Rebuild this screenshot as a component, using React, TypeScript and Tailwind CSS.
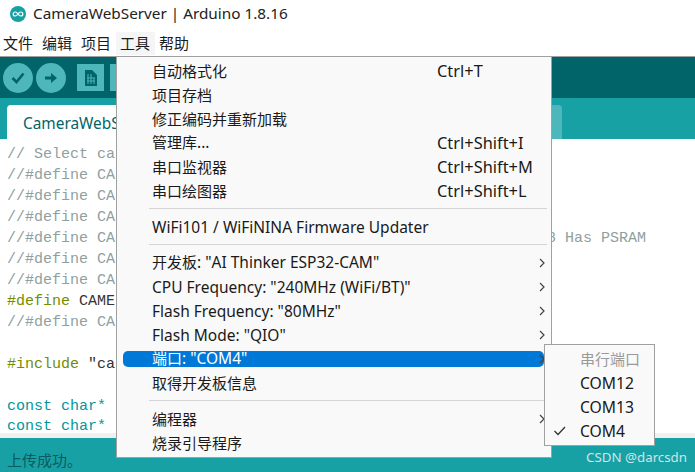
const comment = 'text-[#8f9fa0]';

const code = [
  '// Select ca',
  '//#define CA',
  '//#define CA',
  '//#define CA',
  '//#define CA',
  '//#define CA',
  '//#define CA',
];

function Chevron() {
  return (
    <svg width="8" height="10" viewBox="0 0 8 10" className="absolute right-[5px] top-[7px]">
      <path d="M2 1l4 4-4 4" fill="none" stroke="#444" strokeWidth="1.2" />
    </svg>
  );
}

function Item({ label, latin, keys, sub, active }: { label?: string; latin?: string; keys?: string; sub?: boolean; active?: boolean }) {
  return (
    <div className={`relative flex h-6 items-center justify-between pl-[35px] pr-[26px] ${active ? 'text-white' : ''}`}>
      {active && <div className="absolute left-[6px] right-[7px] top-[4px] h-4 rounded-[5px] bg-[#0078d7]" />}
      <span className={`relative ${label ? '' : 'pt-[2px]'}`}>
        {label}
        {latin && <span className="text-[15.5px]">{latin}</span>}
      </span>
      {keys && <span className="w-[88px] whitespace-nowrap text-[16.4px]">{keys}</span>}
      {sub && <Chevron />}
    </div>
  );
}

function Sep() {
  return <div className="mb-[6px] ml-[32px] mr-[4px] mt-[5px] h-px bg-[#d5d5d5]" />;
}

export default function App() {
  return (
    <div className="relative flex h-[472px] w-[695px] flex-col overflow-hidden bg-white font-[family-name:'Noto_Sans','Noto_Sans_CJK_SC',sans-serif] text-[15px] text-[#1a1a1a]">
      {/* barra de titulo */}
      <div className="flex h-[27px] shrink-0 items-center pl-[10px]">
        <svg width="16" height="16" viewBox="0 0 16 16">
          <circle cx="8" cy="8" r="8" fill="#17a1a5" />
          <path d="M8 8C7 6.600 6.200 6 5.200 6a2 2 0 0 0 0 4c1 0 1.800-.6 2.800-2s1.800-2 2.800-2a2 2 0 0 1 0 4c-1 0-1.800-.6-2.800-2z" fill="none" stroke="#fff" strokeWidth="1.200" />
        </svg>
        <span className="ml-[7px] text-[15.300px] text-[#222]">CameraWebServer | Arduino 1.8.16</span>
      </div>

      {/* menu */}
      <div className="flex h-[30px] shrink-0 items-end border-b border-[#a0a0a0] pb-px pl-[3px]">
        <span className="flex h-[23px] w-[39px] items-center">文件</span>
        <span className="flex h-[23px] w-[39px] items-center">编辑</span>
        <span className="flex h-[23px] w-[35px] items-center">项目</span>
        <span className="flex h-[23px] w-[39px] items-center bg-[#f5f5f5] pl-[4px]">工具</span>
        <span className="ml-[4px] flex h-[23px] items-center">帮助</span>
      </div>

      {/* toolbar */}
      <div className="flex h-[41px] shrink-0 items-center gap-[3px] bg-[#006468] pl-[3px]">
        <div className="flex h-[30px] w-[30px] items-center justify-center rounded-full bg-[#4db7bb]">
          <svg width="16" height="14" viewBox="0 0 16 14">
            <path d="M2.500 7l4 4 7-8.500" fill="none" stroke="#006468" strokeWidth="2.600" />
          </svg>
        </div>
        <div className="flex h-[30px] w-[30px] items-center justify-center rounded-full bg-[#4db7bb]">
          <svg width="16" height="14" viewBox="0 0 16 14">
            <path d="M2 5.500h6V2l6 5-6 5V8.500H2z" fill="#006468" />
          </svg>
        </div>
        <div className="ml-[8px] flex h-[27px] w-[27px] items-center justify-center bg-[#4db7bb]">
          <svg width="14" height="18" viewBox="0 0 14 18">
            <path d="M1 1h7l5 5v11H1z" fill="#006468" />
            <path d="M4 5v10M7 5v10M10 9v6M3 9h8M3 12h8" stroke="#4db7bb" strokeWidth="1" />
          </svg>
        </div>
        <div className="ml-[3px] h-[27px] w-[27px] bg-[#4db7bb]" />
      </div>

      {/* pestañas */}
      <div className="flex h-[41px] shrink-0 items-end gap-[2px] bg-[#17a1a5] pl-[7px]">
        <div className="flex h-[34px] w-[180px] items-center overflow-hidden rounded-t-[4px] bg-white pl-[16px] pt-[3px] text-[15.400px] text-[#006468]">
          CameraWebS
        </div>
        <div className="h-[34px] w-[373px] rounded-t-[4px] bg-[#4db7bb]" />
      </div>

      {/* editor */}
      <div className="relative min-h-0 flex-1 whitespace-pre pl-[7px] pt-[5px] font-[family-name:'Liberation_Mono',monospace] text-[15px] leading-[21px]">
        {code.map((l, i) => (
          <div key={i} className={`h-[21px] ${comment}`}>{l}</div>
        ))}
        <div className="h-[21px]"><span className="text-[#728e00]">#define</span> <span className="text-[#333]">CAME</span></div>
        <div className={`h-[21px] ${comment}`}>//#define CA</div>
        <div className="h-[21px]" />
        <div className="h-[21px]"><span className="text-[#728e00]">#include</span> <span className="text-[#333]">"ca</span></div>
        <div className="h-[21px]" />
        <div className="h-[21px] text-[#00979c]">const char*</div>
        <div className="h-[16px] pt-[4px] leading-[12px] text-[#00979c]">const char*</div>
        {/* lo que asoma a la derecha del menu */}
        <div className={`absolute left-[547px] top-[89px] ${comment}`}>8 Has PSRAM</div>
      </div>

      {/* estado */}
      <div className="h-[5px] shrink-0 bg-[#f0f0f0]" />
      <div className="flex h-[34px] shrink-0 items-center justify-between bg-[#17a1a5] pl-[7px] pr-[8px]">
        <span className="pt-[10px] text-[15px] text-[#0b5a5e]">上传成功。</span>
        <span className="pt-[6px] text-[13.300px] text-[#cfe5e5]">CSDN @darcsdn</span>
      </div>

      {/* menu Herramientas */}
      <div className="absolute left-[116px] top-[56px] h-[402px] w-[436px] border border-[#a0a0a0] bg-[#f9f9f9] py-[2px] text-[15px]">
        <Item label="自动格式化" keys="Ctrl+T" />
        <Item label="项目存档" />
        <Item label="修正编码并重新加载" />
        <Item label="管理库" latin="..." keys="Ctrl+Shift+I" />
        <Item label="串口监视器" keys="Ctrl+Shift+M" />
        <Item label="串口绘图器" keys="Ctrl+Shift+L" />
        <Sep />
        <Item latin="WiFi101 / WiFiNINA Firmware Updater" />
        <Sep />
        <Item label="开发板" latin={': "AI Thinker ESP32-CAM"'} sub />
        <Item latin={'CPU Frequency: "240MHz (WiFi/BT)"'} sub />
        <Item latin={'Flash Frequency: "80MHz"'} sub />
        <Item latin={'Flash Mode: "QIO"'} sub />
        <Item label="端口" latin={': "COM4"'} sub active />
        <Item label="取得开发板信息" />
        <Sep />
        <Item label="编程器" sub />
        <Item label="烧录引导程序" />
      </div>

      {/* submenu puerto */}
      <div className="absolute left-[544px] top-[344px] h-[102px] w-[111px] border border-[#a0a0a0] bg-[#f9f9f9] pt-[2px] text-[15.700px]">
        <div className="flex h-6 items-center pl-[35px] text-[15px] text-[#9a9a9a]">串行端口</div>
        <div className="flex h-6 items-center pl-[35px] pt-[2px]">COM12</div>
        <div className="flex h-6 items-center pl-[35px] pt-[2px]">COM13</div>
        <div className="relative flex h-6 items-center pl-[35px] pt-[2px]">
          <svg width="14" height="12" viewBox="0 0 14 12" className="absolute left-[8px] top-[6px]">
            <path d="M1.500 6l3.500 3.500L12 2" fill="none" stroke="#333" strokeWidth="1.300" />
          </svg>
          COM4
        </div>
      </div>
    </div>
  );
}
